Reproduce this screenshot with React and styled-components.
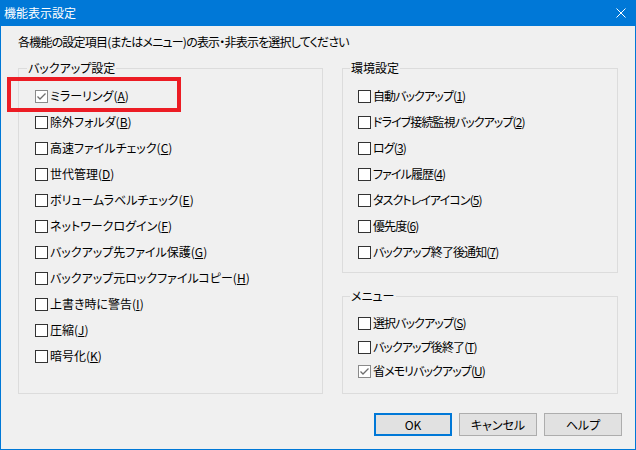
import React from "react";
import styled, { createGlobalStyle } from "styled-components";

const GlobalStyle = createGlobalStyle`
  html, body {
    margin: 0;
    padding: 0;
    background: #f0f0f0;
  }
  body {
    font-family: "Noto Sans CJK JP", "Noto Sans", sans-serif;
    font-size: 12px;
    color: #000;
    font-feature-settings: "palt";
  }
`;

const Window = styled.div`
  position: relative;
  width: 636px;
  height: 450px;
  box-sizing: border-box;
  border: 1px solid #0078d7;
  border-top: none;
  background: #f0f0f0;
  display: flex;
  flex-direction: column;
`;

const TitleBar = styled.div`
  height: 26px;
  margin: 0 -1px;
  background: #0078d7;
  color: #fff;
  display: flex;
  align-items: center;
  justify-content: space-between;
  padding: 0 10px 0 4px;
  flex-shrink: 0;
  line-height: 14px;
`;

const Body = styled.div`
  flex: 1;
  display: flex;
  flex-direction: column;
  padding: 8px 13px 13px 17px;
`;

const Intro = styled.div`
  line-height: 16px;
  height: 16px;
  letter-spacing: -0.8px;
  white-space: nowrap;
`;

const Columns = styled.div`
  display: flex;
  gap: 19px;
  height: 333px;
  margin-top: 11px;
  padding-right: 3px;
`;

const RightColumn = styled.div`
  display: flex;
  flex-direction: column;
  gap: 16px;
  width: 276px;
`;

const Group = styled.fieldset`
  margin: 0;
  padding: 8px 0 ${(p) => p.$padBottom || 0}px ${(p) => p.$padLeft}px;
  border: 1px solid #dcdcdc;
  box-sizing: border-box;
  width: ${(p) => p.$width || "auto"};
  flex: ${(p) => (p.$grow ? 1 : "none")};
  min-width: 0;
`;

const Legend = styled.legend`
  margin-left: -${(p) => p.$shift}px;
  padding: 0 1px;
  line-height: 14px;
`;

const Row = styled.label`
  display: flex;
  align-items: center;
  height: ${(p) => p.$h}px;
  gap: 2px;
  white-space: nowrap;
  line-height: 14px;
  letter-spacing: ${(p) => (p.$tight ? "-0.9px" : "0")};
`;

const Box = styled.span`
  width: 13px;
  height: 13px;
  box-sizing: border-box;
  border: 1px solid ${(p) => (p.$checked ? "#8a8a8a" : "#333")};
  background: #fff;
  display: flex;
  align-items: center;
  justify-content: center;
  flex-shrink: 0;
`;

const Key = styled.span`
  text-decoration: underline;
  text-underline-offset: 1px;
`;

const Buttons = styled.div`
  display: flex;
  justify-content: flex-end;
  gap: 7px;
  margin-top: 19px;
`;

const Button = styled.button`
  width: 78px;
  height: 23px;
  box-sizing: border-box;
  background: #e1e1e1;
  border: ${(p) => (p.$primary ? "2px solid #0078d7" : "1px solid #adadad")};
  font-family: inherit;
  font-size: 12px;
  font-feature-settings: "palt";
  color: #000;
  padding: 0;
`;

const Highlight = styled.div`
  position: absolute;
  left: 6px;
  top: 77px;
  width: 174px;
  height: 35px;
  box-sizing: border-box;
  border: 4px solid #ec1c24;
  pointer-events: none;
`;

const Check = ({ checked }) => (
  <Box $checked={checked}>
    {checked && (
      <svg width="11" height="11" viewBox="0 0 11 11">
        <path d="M1.5 5.5 L4 8 L9.5 2.5" fill="none" stroke="#6e6e6e" strokeWidth="1.3" />
      </svg>
    )}
  </Box>
);

const Item = ({ label, k, checked, h = 26, tight }) => (
  <Row $h={h} $tight={tight}>
    <Check checked={checked} />
    <span>
      {label}(<Key>{k}</Key>)
    </span>
  </Row>
);

const backupItems = [
  ["ミラーリング", "A", true],
  ["除外フォルダ", "B"],
  ["高速ファイルチェック", "C"],
  ["世代管理", "D"],
  ["ボリュームラベルチェック", "E"],
  ["ネットワークログイン", "F"],
  ["バックアップ先ファイル保護", "G"],
  ["バックアップ元ロックファイルコピー", "H"],
  ["上書き時に警告", "I"],
  ["圧縮", "J"],
  ["暗号化", "K"],
];

const envItems = [
  ["自動バックアップ", "1"],
  ["ドライブ接続監視バックアップ", "2"],
  ["ログ", "3"],
  ["ファイル履歴", "4"],
  ["タスクトレイアイコン", "5"],
  ["優先度", "6"],
  ["バックアップ終了後通知", "7"],
];

const menuItems = [
  ["選択バックアップ", "S"],
  ["バックアップ後終了", "T"],
  ["省メモリバックアップ", "U", true],
];

export default function App() {
  return (
    <>
      <GlobalStyle />
      <Window>
        <TitleBar>
          <span>機能表示設定</span>
          <svg width="10" height="10" viewBox="0 0 10 10">
            <path d="M0.5 0.5 L9.5 9.5 M9.5 0.5 L0.5 9.5" stroke="#fff" strokeWidth="1" />
          </svg>
        </TitleBar>
        <Body>
          <Intro>各機能の設定項目(またはメニュー)の表示・非表示を選択してください</Intro>
          <Columns>
            <Group $width="305px" $padLeft={16}>
              <Legend $shift={8}>バックアップ設定</Legend>
              {backupItems.map(([l, k, c]) => (
                <Item key={k} label={l} k={k} checked={c} />
              ))}
            </Group>
            <RightColumn>
              <Group $padLeft={15} $padBottom={7}>
                <Legend $shift={8}>環境設定</Legend>
                {envItems.map(([l, k, c]) => (
                  <Item key={k} label={l} k={k} checked={c} tight />
                ))}
              </Group>
              <Group $padLeft={15} $grow>
                <Legend $shift={8}>メニュー</Legend>
                {menuItems.map(([l, k, c]) => (
                  <Item key={k} label={l} k={k} checked={c} h={24} tight />
                ))}
              </Group>
            </RightColumn>
          </Columns>
          <Buttons>
            <Button $primary>OK</Button>
            <Button>キャンセル</Button>
            <Button>ヘルプ</Button>
          </Buttons>
        </Body>
        <Highlight />
      </Window>
    </>
  );
}
